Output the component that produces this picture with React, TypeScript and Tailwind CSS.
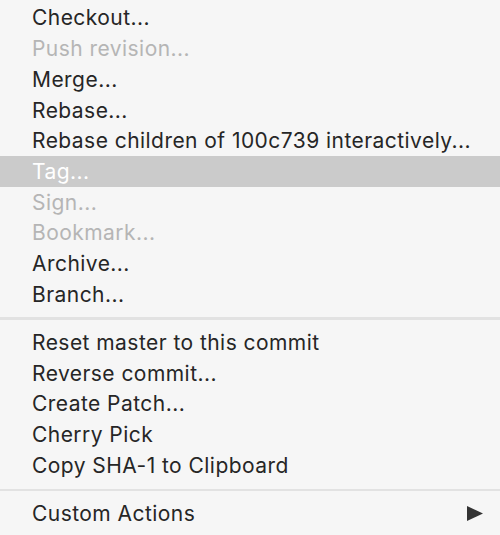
const groups: { label: string; disabled?: boolean; active?: boolean; submenu?: boolean }[][] = [
  [
    { label: 'Checkout...' },
    { label: 'Push revision...', disabled: true },
    { label: 'Merge...' },
    { label: 'Rebase...' },
    { label: 'Rebase children of 100c739 interactively...' },
    { label: 'Tag...', active: true },
    { label: 'Sign...', disabled: true },
    { label: 'Bookmark...', disabled: true },
    { label: 'Archive...' },
    { label: 'Branch...' },
  ],
  [
    { label: 'Reset master to this commit' },
    { label: 'Reverse commit...' },
    { label: 'Create Patch...' },
    { label: 'Cherry Pick' },
    { label: 'Copy SHA-1 to Clipboard' },
  ],
  [{ label: 'Custom Actions', submenu: true }],
]

export default function App() {
  return (
    <div
      className="w-[500px] h-[535px] overflow-hidden bg-[#f6f6f6] pt-[2.6px] text-[21px] tracking-[0.45px] text-[#262626] select-none"
      style={{ fontFamily: 'Inter, "Liberation Sans", Arial, sans-serif' }}
    >
      {groups.map((items, gi) => (
        <div key={gi}>
          {gi > 0 && (
            <div className="h-[17.8px] pt-[7.8px]">
              <div className="h-[2.6px] bg-[#e2e2e2]" />
            </div>
          )}
          {items.map((it) => (
            <div
              key={it.label}
              className={
                'h-[30.7px] flex items-center pl-[32px] pr-[17px] ' +
                (it.active ? 'bg-[#cbcbcb] text-white' : it.disabled ? 'text-[#b5b5b5]' : '')
              }
            >
              <span className="flex-1 whitespace-nowrap leading-none">{it.label}</span>
              {it.submenu && (
                <svg width="16" height="15" viewBox="0 0 16 15" className="fill-[#333]">
                  <path d="M0 0 L16 7.5 L0 15 Z" />
                </svg>
              )}
            </div>
          ))}
        </div>
      ))}
    </div>
  )
}
